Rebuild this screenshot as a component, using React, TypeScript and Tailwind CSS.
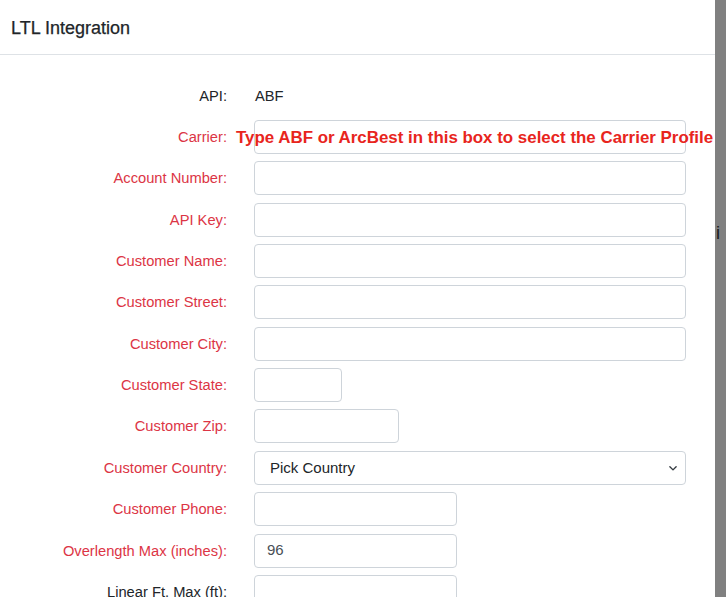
import React from "react";

type Row = {
  label: string;
  kind?: "input" | "select" | "text";
  width?: string;
  value?: string;
  red?: boolean;
};

const ROWS: Row[] = [
  { label: "Account Number:", red: true },
  { label: "API Key:", red: true },
  { label: "Customer Name:", red: true },
  { label: "Customer Street:", red: true },
  { label: "Customer City:", red: true },
  { label: "Customer State:", red: true, width: "w-[88px]" },
  { label: "Customer Zip:", red: true, width: "w-[145px]" },
  { label: "Customer Country:", red: true, kind: "select" },
  { label: "Customer Phone:", red: true, width: "w-[203px]" },
  { label: "Overlength Max (inches):", red: true, width: "w-[203px]", value: "96" },
  { label: "Linear Ft. Max (ft):", width: "w-[203px]" },
];

function Label({ text, red }: { text: string; red?: boolean }) {
  return (
    <div className={`w-[227px] shrink-0 text-right text-[14.7px] ${red ? "text-[#dc3545]" : "text-[#212529]"}`}>
      {text}
    </div>
  );
}

function Field({ row }: { row: Row }) {
  if (row.kind === "select") {
    return (
      <div className="ml-[27px] flex h-[34px] w-[432px] items-center justify-between rounded-[4px] border border-[#ced4da] bg-white pl-[15px] pr-[7px] text-[15px] text-[#212529]">
        <span>Pick Country</span>
        <svg width="10" height="10" viewBox="0 0 16 16" fill="none" stroke="#343a40" strokeWidth="2.2" strokeLinecap="round" strokeLinejoin="round">
          <path d="M3 6l5 5 5-5" />
        </svg>
      </div>
    );
  }
  return (
    <div
      className={`ml-[27px] flex h-[34px] ${row.width ?? "w-[432px]"} items-center rounded-[4px] border border-[#ced4da] bg-white px-[12px] text-[15px] text-[#495057]`}
    >
      {row.value}
    </div>
  );
}

export default function App() {
  return (
    <div className="flex h-[597px] w-[726px] overflow-hidden bg-[#808080] font-['Liberation_Sans',Arial,sans-serif]">
      <div className="flex w-[715px] shrink-0 flex-col bg-white">
        {/* header */}
        <div className="flex h-[55px] shrink-0 items-center border-b border-[#dee2e6] pl-[11px] pt-[2px]">
          <h1 className="text-[18px] text-[#212529] [-webkit-text-stroke:0.25px_#212529]">LTL Integration</h1>
        </div>

        {/* body */}
        <div className="flex flex-col gap-[7.36px] pt-[23.6px]">
          <div className="flex h-[34px] items-center">
            <Label text="API:" />
            <div className="ml-[28px] text-[14.7px] text-[#212529]">ABF</div>
          </div>

          <div className="relative flex h-[34px] items-center">
            <Label text="Carrier:" red />
            <div className="ml-[27px] h-[34px] w-[432px] rounded-[4px] border border-[#ced4da] bg-white" />
            {/* hint over the carrier box */}
            <div className="absolute left-[236px] top-[5px] whitespace-nowrap text-[16.9px] font-bold text-[#e8251d]">
              Type ABF or ArcBest in this box to select the Carrier Profile
            </div>
          </div>

          {ROWS.map((r) => (
            <div key={r.label} className="flex h-[34px] items-center">
              <Label text={r.label} red={r.red} />
              <Field row={r} />
            </div>
          ))}
        </div>
      </div>

      {/* backdrop edge */}
      <div className="relative flex-1">
        <span className="absolute left-[1px] top-[220px] text-[18px] text-[#1a1a1a]">i</span>
      </div>
    </div>
  );
}
